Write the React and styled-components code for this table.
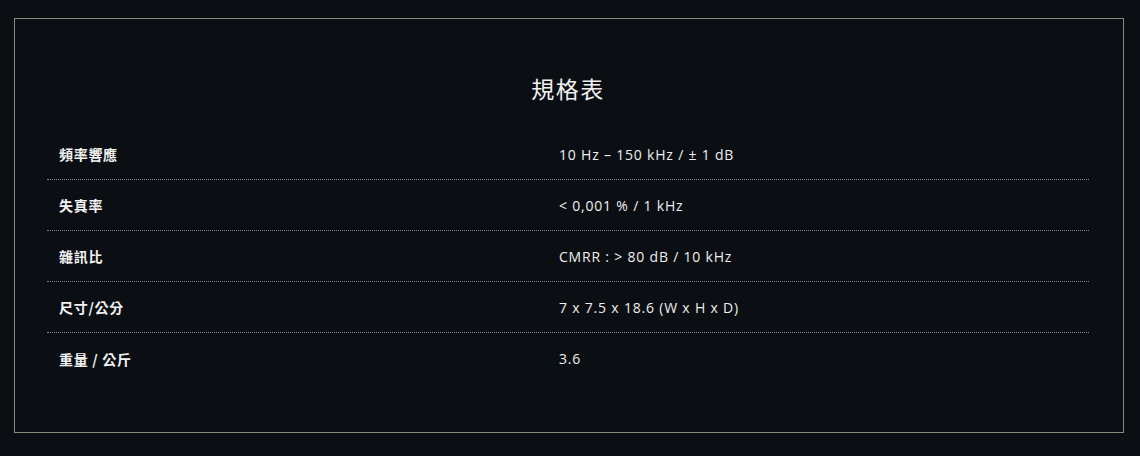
import React from 'react'
import styled, { createGlobalStyle } from 'styled-components'

const specs = [
  { label: '頻率響應', value: '10 Hz – 150 kHz / ± 1 dB' },
  { label: '失真率', value: '< 0,001 % / 1 kHz' },
  { label: '雜訊比', value: 'CMRR : > 80 dB / 10 kHz' },
  { label: '尺寸/公分', value: '7 x 7.5 x 18.6 (W x H x D)' },
  { label: '重量 / 公斤', value: '3.6' },
]

function App() {
  return (
    <Page>
      <GlobalStyle />
      <Panel>
        <Title>規格表</Title>
        <Table>
          {specs.map((s, i) => (
            <Row key={s.label} last={i === specs.length - 1}>
              <Label>{s.label}</Label>
              <Value>{s.value}</Value>
            </Row>
          ))}
        </Table>
      </Panel>
    </Page>
  )
}

export default App

const GlobalStyle = createGlobalStyle`
  html, body {
    margin: 0;
    padding: 0;
    background: #0b0e13;
  }
  body {
    font-family: "Open Sans", "Noto Sans CJK TC", sans-serif;
    color: #e9e9e9;
  }
`

const Page = styled.div`
  width: 1140px;
  height: 456px;
  padding: 18px 16px 0 14px;
  box-sizing: border-box;
`

const Panel = styled.section`
  border: 1px solid #8b887c;
  height: 415px;
  box-sizing: border-box;
  padding: 0 34px 0 32px;
  display: flex;
  flex-direction: column;
`

const Title = styled.h2`
  margin: 53px 0 0;
  height: 57px;
  text-align: center;
  font-family: "Noto Sans CJK TC", sans-serif;
  font-weight: 400;
  font-size: 23px;
  line-height: 32px;
  color: #f0f0f0;
  letter-spacing: 1.5px;
`

const Table = styled.div`
  display: flex;
  flex-direction: column;
`

const Row = styled.div`
  display: grid;
  grid-template-columns: 500px 1fr;
  height: 51px;
  align-items: center;
  box-sizing: border-box;
  border-bottom: ${p => (p.last ? 'none' : '1px dotted #8a8a8a')};
`

const Label = styled.div`
  padding-left: 12px;
  font-family: "Noto Sans CJK TC", sans-serif;
  font-weight: 700;
  font-size: 14px;
  color: #f2f2f2;
  letter-spacing: 0.7px;
`

const Value = styled.div`
  padding-left: 12px;
  font-size: 14px;
  letter-spacing: 0.8px;
  color: #eeeeee;
`
